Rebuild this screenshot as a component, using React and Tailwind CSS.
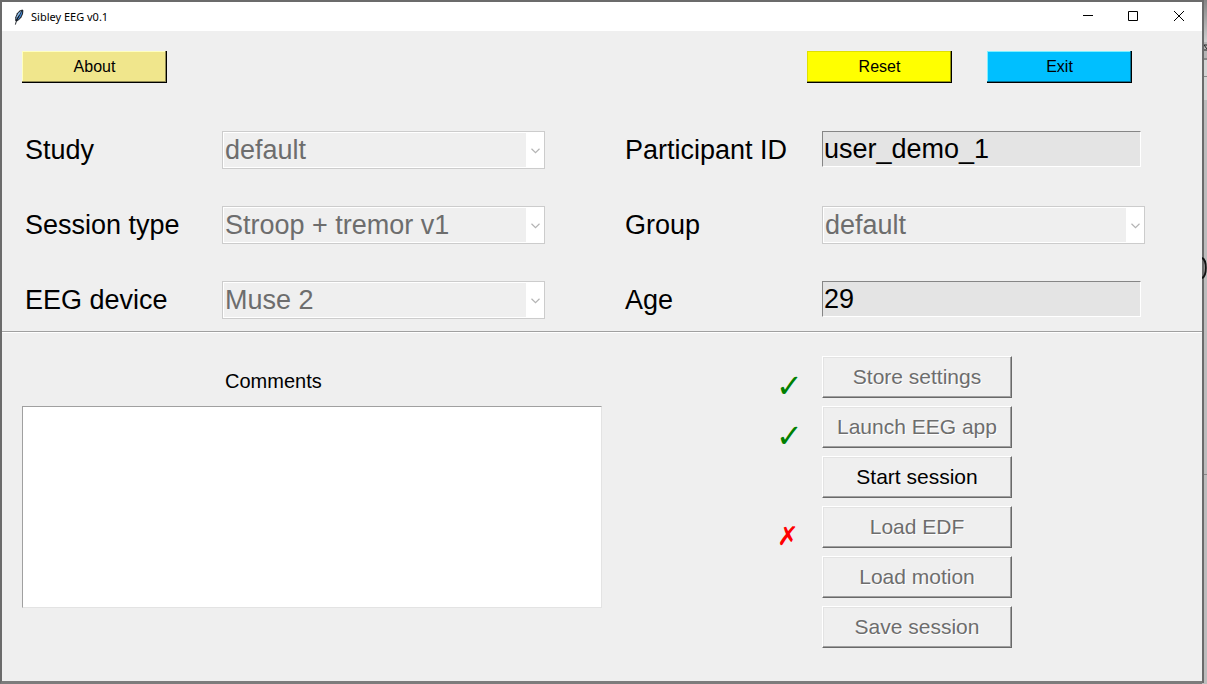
import React from "react";

const font = "font-['Liberation_Sans',Arial,sans-serif]";

function TkButton({ className, children, ...rest }) {
  return (
    <button
      type="button"
      className={`h-8 w-[145px] border-r border-b border-black pt-px pl-px text-base text-black ${className}`}
      {...rest}
    >
      {children}
    </button>
  );
}

function ActionButton({ children, disabled }) {
  return (
    <button
      type="button"
      disabled={disabled}
      className="h-[42px] w-[190px] border border-t-white border-l-white border-r-[#696969] border-b-[#696969] bg-[#efefef] text-[21px] leading-6 text-black shadow-[inset_-1px_-1px_0_#a0a0a0,inset_1px_1px_0_#e3e3e3] disabled:text-[#6d6d6d] disabled:[text-shadow:1px_1px_0_#fff]"
    >
      {children}
    </button>
  );
}

function ComboBox({ id, value }) {
  return (
    <div className="relative h-[38px] w-full max-w-[323px] border border-[#cccccc] bg-white p-px">
      <select
        id={id}
        disabled
        defaultValue={value}
        className="block h-full w-[calc(100%-17px)] appearance-none bg-[#efefef] pl-px text-[27px] leading-8 text-[#6d6d6d] opacity-100"
      >
        <option>{value}</option>
      </select>
      <svg className="pointer-events-none absolute top-4 right-1 h-[6px] w-[9px]" viewBox="0 0 9 6" fill="none">
        <path d="M0.5 0.8 4.5 4.6 8.5 0.8" stroke="#b4b4b4" strokeWidth="1.2" />
      </svg>
    </div>
  );
}

function Entry({ id, value }) {
  return (
    <input
      id={id}
      type="text"
      defaultValue={value}
      className="block h-9 w-full max-w-[319px] border border-t-[#868686] border-l-[#868686] border-r-white border-b-white bg-[#e4e4e4] pl-px text-[27px] leading-8 text-black outline-none"
    />
  );
}

function Field({ id, label, children }) {
  return (
    <div className="flex h-[38px]">
      <label htmlFor={id} className="flex h-full w-[197px] shrink-0 items-center text-[27px] leading-8 whitespace-nowrap">
        {label}
      </label>
      <div className="min-w-0 flex-1">{children}</div>
    </div>
  );
}

function Feather() {
  return (
    <svg className="h-4 w-4" viewBox="0 0 16 16">
      <path d="M4.2 11.8 4.3 8.2 6 4.2 8.6 1.4 11.4 .4 12.4 1.6 12 5 10.4 8.4 8 11 5.8 12.4Z" fill="#20262e" />
      <path d="M5.2 10.4 5.6 7.4 7.4 4 10.4 1.6 8.2 6Z" fill="#8fc0ef" />
      <path d="M6.4 11 8.8 6.6 11.2 1.8 11 4.8 9.6 7.8 7.6 10.3Z" fill="#3f87d6" />
      <path d="M4.4 15.6 5.6 11.2 8 6.4" stroke="#10151c" strokeWidth=".9" fill="none" />
    </svg>
  );
}

function TitleBar() {
  return (
    <header className="flex h-[29px] items-center bg-white pl-[9px] font-['Noto_Sans','Open_Sans',sans-serif]">
      <Feather />
      <h1 className="ml-1 text-[11px] leading-4 text-black">Sibley EEG v0.1</h1>
      <div className="ml-auto flex h-full">
        <button type="button" aria-label="Minimize" className="grid h-full w-[45px] place-items-center">
          <svg className="h-[11px] w-[11px]" viewBox="0 0 11 11">
            <path d="M1 4.5H11" stroke="#000" />
          </svg>
        </button>
        <button type="button" aria-label="Maximize" className="grid h-full w-[46px] place-items-center">
          <svg className="h-[11px] w-[11px]" viewBox="0 0 11 11" fill="none">
            <path d="M.5 -.5H9.5V8.5H.5Z" stroke="#000" className="translate-y-px" />
          </svg>
        </button>
        <button type="button" aria-label="Close" className="grid h-full w-[46px] place-items-center">
          <svg className="h-[11px] w-[11px]" viewBox="0 0 11 11">
            <path d="M0 0 10 10M10 0 0 10" stroke="#000" />
          </svg>
        </button>
      </div>
    </header>
  );
}

function Backdrop() {
  return (
    <div className="relative w-[5px] shrink-0 overflow-hidden" aria-hidden="true">
      <svg className="absolute top-0 left-0 h-[684px] w-[5px]" viewBox="0 0 5 684" fill="none">
        <defs>
          <linearGradient id="fade" x2="0" y2="1">
            <stop stopColor="#858585" />
            <stop offset="1" stopColor="#cfcfcf" />
          </linearGradient>
        </defs>
        <path fill="url(#fade)" d="M0 0h5v42H0z" />
        <path fill="#b5b5b5" d="M0 42h5v16H0z" />
        <path fill="#d4d4d4" d="M0 60h5v40H0z" />
        <path fill="#888" d="M0 58h5v2H0zM0 76h5v1H0z" />
        <path fill="#bdbdbd" d="M0 100h5v584H0z" />
        <path fill="#888" d="M0 474h5v1H0z" />
        <path stroke="#222" d="M2 45h3M2 50h3M2 45l3 4" />
        <path fill="#6b6b6b" d="M0 0h2v683H0z" />
        <path stroke="#111" strokeWidth="2" d="M0 258c5 2 5 18 0 20" />
      </svg>
    </div>
  );
}

const ACTIONS = [
  { label: "Store settings", disabled: true, mark: "ok" },
  { label: "Launch EEG app", disabled: true, mark: "ok" },
  { label: "Start session", disabled: false },
  { label: "Load EDF", disabled: true, mark: "bad" },
  { label: "Load motion", disabled: true },
  { label: "Save session", disabled: true },
];

function Mark({ kind }) {
  if (kind === "ok") return <span className="text-[32px] leading-6 text-[#008000]">✓</span>;
  if (kind === "bad") return <span className="pl-px text-[26px] leading-6 text-[#ff0000]">✗</span>;
  return null;
}

export default function App() {
  return (
    <div className={`flex min-h-screen bg-[#bdbdbd] ${font}`}>
      <main className="flex min-w-0 flex-1 flex-col border-t-2 border-b-3 border-l-2 border-[#6b6b6b] border-b-[#7c7c7c] bg-[#efefef] text-black">
        <TitleBar />

        <div className="flex pt-5 pr-[70px] pl-5">
          <TkButton className="bg-[#f0e68c] shadow-[inset_-1px_-1px_0_#908a54,inset_1px_1px_0_#ffffc0]">About</TkButton>
          <div className="ml-auto flex gap-[35px]">
            <TkButton className="bg-[#ffff00] shadow-[inset_-1px_-1px_0_#999900,inset_1px_1px_0_#e0e000]">Reset</TkButton>
            <TkButton className="bg-[#00bfff] shadow-[inset_-1px_-1px_0_#007399,inset_1px_1px_0_#7ff0ff]">Exit</TkButton>
          </div>
        </div>

        <form className="mt-12 grid grid-cols-2 border-b border-[#a0a0a0] pb-3 shadow-[0_1px_0_#fff]">
          <div className="flex flex-col gap-[37px] pl-[23px]">
            <Field id="study" label="Study">
              <ComboBox id="study" value="default" />
            </Field>
            <Field id="session" label="Session type">
              <ComboBox id="session" value="Stroop + tremor v1" />
            </Field>
            <Field id="device" label="EEG device">
              <ComboBox id="device" value="Muse 2" />
            </Field>
          </div>
          <div className="flex flex-col gap-[37px] pl-[23px]">
            <Field id="participant" label="Participant ID">
              <Entry id="participant" value="user_demo_1" />
            </Field>
            <Field id="group" label="Group">
              <ComboBox id="group" value="default" />
            </Field>
            <Field id="age" label="Age">
              <Entry id="age" value="29" />
            </Field>
          </div>
        </form>

        <div className="grid grid-cols-2 pt-6 pb-8">
          <section className="flex flex-col pl-5">
            <label htmlFor="comments" className="mt-3 pl-[203px] text-xl leading-[26px]">
              Comments
            </label>
            <textarea
              id="comments"
              className="mt-3 block h-[202px] w-full max-w-[580px] resize-none border border-t-[#a0a0a0] border-l-[#a0a0a0] border-r-[#e3e3e3] border-b-[#e3e3e3] bg-white p-1 text-xl outline-none"
            />
          </section>
          <ul className="flex flex-col gap-2 pl-[174px]">
            {ACTIONS.map((a) => (
              <li key={a.label} className="flex h-[42px]">
                <div className="flex w-[46px] items-end font-['DejaVu_Sans',sans-serif]">
                  <Mark kind={a.mark} />
                </div>
                <ActionButton disabled={a.disabled}>{a.label}</ActionButton>
              </li>
            ))}
          </ul>
        </div>
      </main>
      <Backdrop />
    </div>
  );
}
